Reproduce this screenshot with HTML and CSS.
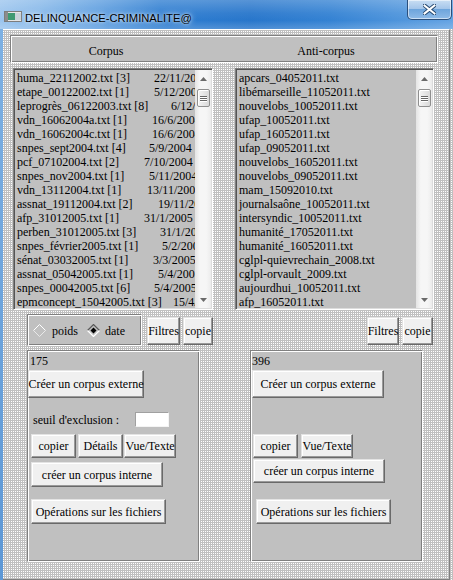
FILE: index.html
```html
<!DOCTYPE html>
<html>
<head>
<meta charset="utf-8">
<title>DELINQUANCE-CRIMINALITE@</title>
<link rel="stylesheet" href="styles.css">
</head>
<body>
<div class="window">
  <div class="titlebar">
    <svg class="appicon" width="18" height="11" viewBox="0 0 18 11">
      <rect x="0.5" y="0.5" width="17" height="10" fill="#e6e6e6" stroke="#7d7d7d"/>
      <rect x="1" y="1" width="3" height="9" fill="#8c8c8c"/>
      <rect x="4" y="2" width="7" height="7" fill="#3f9a72"/>
      <rect x="11" y="2" width="6" height="7" fill="#c9d3d9"/>
    </svg>
    <span class="title">DELINQUANCE-CRIMINALITE@</span>
    <div class="close">
      <svg width="13" height="11" viewBox="0 0 13 11">
        <path d="M1.5 1.5 L11.5 9.5 M11.5 1.5 L1.5 9.5" stroke="#24476f" stroke-width="4" stroke-linecap="square"/>
        <path d="M1.5 1.5 L11.5 9.5 M11.5 1.5 L1.5 9.5" stroke="#ffffff" stroke-width="2" stroke-linecap="square"/>
      </svg>
    </div>
  </div>
  <div class="client">
    <div class="frame">
      <div class="header">
        <span class="hcell">Corpus</span>
        <span class="hcell">Anti-corpus</span>
      </div>
      <div class="columns">
        <div class="col col-left">
          <div class="listbox">
            <div class="items">
              <div class="row" style="--d:137px"><span class="fn">huma_22112002.txt [3]</span><span>22/11/2002</span></div>
              <div class="row" style="--d:137px"><span class="fn">etape_00122002.txt [1]</span><span>5/12/2002</span></div>
              <div class="row" style="--d:154px"><span class="fn">leprogrès_06122003.txt [8]</span><span>6/12/2003</span></div>
              <div class="row" style="--d:135px"><span class="fn">vdn_16062004a.txt [1]</span><span>16/6/2004</span></div>
              <div class="row" style="--d:135px"><span class="fn">vdn_16062004c.txt [1]</span><span>16/6/2004</span></div>
              <div class="row" style="--d:132px"><span class="fn">snpes_sept2004.txt [4]</span><span>5/9/2004</span></div>
              <div class="row" style="--d:127px"><span class="fn">pcf_07102004.txt [2]</span><span>7/10/2004</span></div>
              <div class="row" style="--d:132px"><span class="fn">snpes_nov2004.txt [1]</span><span>5/11/2004</span></div>
              <div class="row" style="--d:130px"><span class="fn">vdn_13112004.txt [1]</span><span>13/11/2004</span></div>
              <div class="row" style="--d:141px"><span class="fn">assnat_19112004.txt [2]</span><span>19/11/2004</span></div>
              <div class="row" style="--d:127px"><span class="fn">afp_31012005.txt [1]</span><span>31/1/2005</span></div>
              <div class="row" style="--d:143px"><span class="fn">perben_31012005.txt [3]</span><span>31/1/2005</span></div>
              <div class="row" style="--d:145px"><span class="fn">snpes_février2005.txt [1]</span><span>5/2/2005</span></div>
              <div class="row" style="--d:136px"><span class="fn">sénat_03032005.txt [1]</span><span>3/3/2005</span></div>
              <div class="row" style="--d:141px"><span class="fn">assnat_05042005.txt [1]</span><span>5/4/2005</span></div>
              <div class="row" style="--d:137px"><span class="fn">snpes_00042005.txt [6]</span><span>5/4/2005</span></div>
              <div class="row" style="--d:156px"><span class="fn">epmconcept_15042005.txt [3]</span><span>15/4/2005</span></div>
            </div>
            <div class="scrollbar">
              <div class="arrow"><svg width="7" height="4" viewBox="0 0 7 4"><path d="M0 4 L3.5 0 L7 4 Z" fill="#6a6a6a"/></svg></div>
              <div class="thumb"><i></i><i></i><i></i></div>
              <div class="track"></div>
              <div class="arrow"><svg width="7" height="4" viewBox="0 0 7 4"><path d="M0 0 L3.5 4 L7 0 Z" fill="#6a6a6a"/></svg></div>
            </div>
          </div>
          <div class="controls">
            <div class="radios">
              <svg class="diamond d-off" width="13" height="13" viewBox="0 0 13 13">
                <path d="M6.5 0.5 L12.5 6.5 L6.5 12.5 L0.5 6.5 Z" fill="#c0c0c0"/>
                <path d="M0.5 6.5 L6.5 0.5 L12.5 6.5" fill="none" stroke="#ffffff" stroke-width="1"/>
                <path d="M0.5 6.5 L6.5 12.5 L12.5 6.5" fill="none" stroke="#e8e8e8" stroke-width="1"/>
              </svg>
              <span class="rlabel">poids</span>
              <svg class="diamond d-on" width="13" height="13" viewBox="0 0 13 13">
                <path d="M6.5 0.5 L12.5 6.5 L6.5 12.5 L0.5 6.5 Z" fill="#c0c0c0"/>
                <path d="M0.5 6.5 L6.5 0.5 L12.5 6.5" fill="none" stroke="#5a5a5a" stroke-width="1.2"/>
                <path d="M0.5 6.5 L6.5 12.5 L12.5 6.5" fill="none" stroke="#ffffff" stroke-width="1.2"/>
                <path d="M6.5 3.5 L9.5 6.5 L6.5 9.5 L3.5 6.5 Z" fill="#000"/>
              </svg>
              <span class="rlabel rl2">date</span>
            </div>
            <button class="btn b-filtres">Filtres</button>
            <button class="btn b-copie">copie</button>
          </div>
          <div class="panel">
            <div class="count">175</div>
            <button class="btn b-ext">Créer un corpus externe</button>
            <div class="seuil">
              <span class="seuil-label">seuil d'exclusion :</span>
              <span class="entry"></span>
            </div>
            <div class="brow">
              <button class="btn b-small">copier</button>
              <button class="btn b-small b-det">Détails</button>
              <button class="btn b-vue b-vue1">Vue/Texte</button>
            </div>
            <button class="btn b-int">créer un corpus interne</button>
            <button class="btn b-ops">Opérations sur les fichiers</button>
          </div>
        </div>

        <div class="col col-right">
          <div class="listbox">
            <div class="items">
              <div class="row">apcars_04052011.txt</div>
              <div class="row">libémarseille_11052011.txt</div>
              <div class="row">nouvelobs_10052011.txt</div>
              <div class="row">ufap_10052011.txt</div>
              <div class="row">ufap_16052011.txt</div>
              <div class="row">ufap_09052011.txt</div>
              <div class="row">nouvelobs_16052011.txt</div>
              <div class="row">nouvelobs_09052011.txt</div>
              <div class="row">mam_15092010.txt</div>
              <div class="row">journalsaône_10052011.txt</div>
              <div class="row">intersyndic_10052011.txt</div>
              <div class="row">humanité_17052011.txt</div>
              <div class="row">humanité_16052011.txt</div>
              <div class="row">cglpl-quievrechain_2008.txt</div>
              <div class="row">cglpl-orvault_2009.txt</div>
              <div class="row">aujourdhui_10052011.txt</div>
              <div class="row">afp_16052011.txt</div>
            </div>
            <div class="scrollbar">
              <div class="arrow"><svg width="7" height="4" viewBox="0 0 7 4"><path d="M0 4 L3.5 0 L7 4 Z" fill="#6a6a6a"/></svg></div>
              <div class="thumb"><i></i><i></i><i></i></div>
              <div class="track"></div>
              <div class="arrow"><svg width="7" height="4" viewBox="0 0 7 4"><path d="M0 0 L3.5 4 L7 0 Z" fill="#6a6a6a"/></svg></div>
            </div>
          </div>
          <div class="controls controls-right">
            <button class="btn b-filtres2">Filtres</button>
            <button class="btn b-copie2">copie</button>
          </div>
          <div class="panel panel-right">
            <div class="count">396</div>
            <button class="btn b-ext">Créer un corpus externe</button>
            <div class="brow">
              <button class="btn b-small">copier</button>
              <button class="btn b-vue b-vue2">Vue/Texte</button>
            </div>
            <button class="btn b-int">créer un corpus interne</button>
            <button class="btn b-ops">Opérations sur les fichiers</button>
          </div>
        </div>
      </div>
    </div>
  </div>
</div>
</body>
</html>
```

FILE: styles.css
```css
* { box-sizing: border-box; }
html, body { margin: 0; padding: 0; }
body {
  width: 453px;
  height: 580px;
  overflow: hidden;
  font-family: "Liberation Serif", "Times New Roman", serif;
  font-size: 12px;
  color: #000;
  background: #6da5dd;
}

.window {
  width: 453px;
  height: 580px;
  display: flex;
  flex-direction: column;
  background: linear-gradient(180deg, #7fb2e4, #5d98d6);
}

/* ---------- title bar ---------- */
.titlebar {
  height: 29px;
  flex: none;
  display: flex;
  align-items: flex-start;
  background:
    linear-gradient(180deg, rgba(255,255,255,0.22) 0%, rgba(255,255,255,0.05) 45%, rgba(255,255,255,0) 70%, rgba(255,255,255,0.18) 100%),
    linear-gradient(90deg, #9cc5ee 0px, #86b8e9 40px, #5f9fe0 95px, #2f7ed1 160px, #2876cb 250px, #3482d3 330px, #4f95dc 400px, #63a3e3 453px);
}
.appicon { margin: 11px 0 0 4px; flex: none; }
.title {
  font-family: "Liberation Sans", Arial, sans-serif;
  font-size: 11.2px;
  line-height: 12px;
  margin: 12px 0 0 3px;
  color: #000;
  text-shadow: 0 0 6px rgba(255,255,255,0.9), 0 0 3px rgba(255,255,255,0.8);
  white-space: nowrap;
}
.close {
  margin-left: auto;
  margin-right: 1px;
  width: 45px;
  height: 20px;
  border: 1px solid #2a4f7c;
  border-top: none;
  border-radius: 0 0 5px 5px;
  background: linear-gradient(180deg, #c9def3 0%, #a5c6ea 45%, #6ea5dc 50%, #8fbbe8 100%);
  box-shadow: inset 0 0 0 1px rgba(255,255,255,0.55);
  display: flex;
  align-items: center;
  justify-content: center;
}

/* ---------- client area ---------- */
.client {
  flex: 1;
  margin-left: 3px;
  background-color: #c0c0c0;
  background-image:
    linear-gradient(90deg, transparent 1px, #c0c0c0 1px),
    linear-gradient(180deg, #ffffff 1px, #c0c0c0 1px);
  background-size: 2px 2px, 2px 2px;
}
.frame {
  height: 100%;
  margin-right: 3px;
  border-top: 1px solid #ffffff;
  border-right: 1px solid #808080;
  border-bottom: 1px solid #808080;
  padding: 5px 0 0 7px;
}

.groove {
  border: 1px solid;
}
.header {
  width: 428px;
  height: 28px;
  background: #c0c0c0;
  border: 1px solid;
  border-color: #808080 #ffffff #ffffff #808080;
  box-shadow: inset 1px 1px #ffffff, inset -1px -1px #808080;
  display: grid;
  grid-template-columns: 190px 222px;
  column-gap: 14px;
  padding-top: 8px;
  line-height: 14px;
}
.hcell { text-align: center; }

.columns {
  display: flex;
  margin: 5px 0 0 3px;
}
.col-left { width: 200px; flex: none; }
.col-right { width: 199px; flex: none; margin-left: 22px; }

/* ---------- list boxes ---------- */
.listbox {
  height: 242px;
  display: flex;
  background: #c0c0c0;
  border: 1px solid;
  border-color: #808080 #ffffff #ffffff #808080;
  box-shadow: inset 1px 1px #555555, inset -1px -1px #dcdcdc;
  padding: 1px 1px 1px 1px;
}
.items {
  flex: 1;
  min-width: 0;
  overflow: hidden;
  padding: 1px 0 0 2px;
  line-height: 14px;
  white-space: nowrap;
}
.row { height: 14px; white-space: nowrap; }
.fn { display: inline-block; width: var(--d); }

.scrollbar {
  width: 16px;
  flex: none;
  display: flex;
  flex-direction: column;
  background: linear-gradient(90deg, #e4e4e4, #f6f6f6 30%, #f6f6f6 70%, #ececec);
}
.arrow {
  height: 17px;
  flex: none;
  display: flex;
  align-items: center;
  justify-content: center;
}
.thumb {
  height: 18px;
  margin: 2px 1px 0 2px;
  flex: none;
  border: 1px solid #8f8f8f;
  border-radius: 2px;
  background: linear-gradient(90deg, #f3f3f3, #e6e6e6 50%, #d9d9d9);
  box-shadow: inset 1px 1px #ffffff;
  display: flex;
  flex-direction: column;
  align-items: center;
  justify-content: center;
  gap: 1px;
}
.thumb i {
  display: block;
  width: 7px;
  height: 1px;
  background: #666;
  box-shadow: 0 1px #fff;
}
.track { flex: 1; }

/* ---------- controls under lists ---------- */
.controls {
  display: flex;
  align-items: flex-start;
  margin-top: 4px;
  height: 32px;
}
.radios {
  margin-left: 14px;
  width: 115px;
  height: 32px;
  flex: none;
  display: flex;
  align-items: center;
  background: #c0c0c0;
  border: 1px solid;
  border-color: #808080 #ffffff #ffffff #808080;
  box-shadow: inset 1px 1px #ffffff, inset -1px -1px #808080;
}
.diamond { flex: none; }
.d-off { margin-left: 5px; }
.d-on { margin-left: 9px; }
.rlabel { margin-left: 6px; padding-top: 2px; }
.rl2 { margin-left: 5px; }

.btn {
  font-family: "Liberation Serif", "Times New Roman", serif;
  font-size: 12px;
  color: #000;
  background: #f0f0f0;
  border: 1px solid;
  border-color: #e3e3e3 #696969 #696969 #e3e3e3;
  box-shadow: inset -1px -1px #9a9a9a, inset 1px 1px #ffffff;
  padding: 0;
  margin: 0;
  flex: none;
  display: flex;
  align-items: center;
  justify-content: center;
  white-space: nowrap;
  line-height: 14px;
}
.b-filtres { margin: 3px 0 0 5px; width: 33px; height: 28px; }
.b-copie { margin: 3px 0 0 3px; width: 30px; height: 28px; }
.controls-right { justify-content: flex-end; padding-right: 1px; }
.b-filtres2 { margin-top: 3px; width: 32px; height: 28px; }
.b-copie2 { margin: 3px 0 0 3px; width: 31px; height: 28px; }

/* ---------- lower panels ---------- */
.panel {
  margin: 4px 0 0 14px;
  width: 173px;
  height: 212px;
  background: #c0c0c0;
  border: 1px solid;
  border-color: #808080 #ffffff #ffffff #808080;
  box-shadow: inset 1px 1px #ffffff, inset -1px -1px #808080;
  display: flex;
  flex-direction: column;
  align-items: flex-start;
}
.panel-right { margin-left: 15px; }

.count {
  margin-left: 2px;
  padding-top: 2px;
  line-height: 16px;
}
.panel-right .count { margin-left: 1px; }

.b-ext { margin-top: 1px; width: 116px; height: 28px; }
.panel-right .b-ext { margin-left: 1px; width: 132px; }

.seuil {
  margin-top: 14px;
  height: 15px;
  display: flex;
  align-items: center;
}
.seuil-label { width: 102px; margin-left: 5px; padding-top: 1px; }
.entry {
  width: 34px;
  height: 15px;
  background: #ffffff;
  border: 1px solid;
  border-color: #a0a0a0 #f4f4f4 #f4f4f4 #a0a0a0;
}

.brow {
  display: flex;
  margin: 7px 0 0 3px;
}
.b-small { width: 45px; height: 24px; }
.b-det { margin-left: 2px; }
.b-vue { width: 52px; height: 24px; }
.b-vue1 { margin-left: 1px; }
.b-vue2 { margin-left: 3px; }

.b-int { margin: 4px 0 0 3px; width: 132px; height: 25px; }
.b-ops { margin: 12px 0 0 3px; width: 135px; height: 25px; }

.panel-right .brow { margin: 36px 0 0 2px; }
.panel-right .b-int { margin: 1px 0 0 2px; height: 24px; }
.panel-right .b-ops { margin: 16px 0 0 5px; }
```
